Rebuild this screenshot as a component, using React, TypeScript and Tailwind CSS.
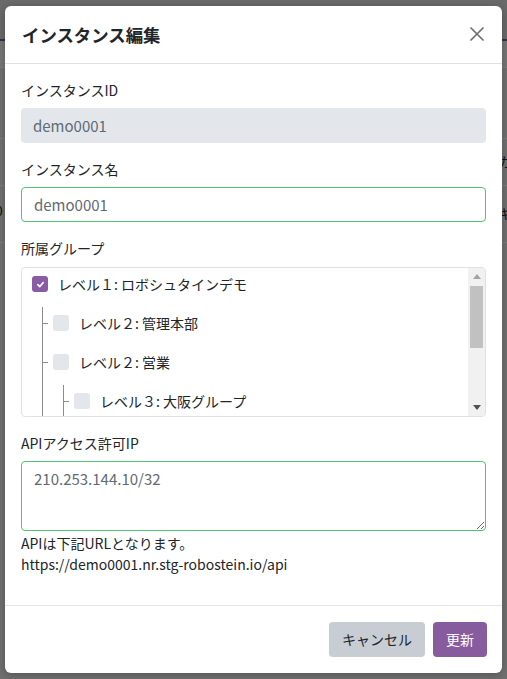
import React from "react";

function Check({ checked }: { checked?: boolean }) {
  if (checked) {
    return (
      <div className="w-4 h-4 rounded-[3px] bg-[#8a5ca6] flex items-center justify-center shrink-0">
        <svg width="9" height="9" viewBox="0 0 10 10">
          <path d="M2 5.2 L4.2 7.3 L8 2.9" fill="none" stroke="#ffffff" strokeWidth="1.8" strokeLinecap="round" strokeLinejoin="round" />
        </svg>
      </div>
    );
  }
  return <div className="w-4 h-4 rounded-[3px] bg-[#e3e6ea] shrink-0" />;
}

function Row({ label, tick, checked }: { label: string; tick?: boolean; checked?: boolean }) {
  return (
    <div className="h-[24px] flex items-center">
      {tick && <div className="w-[5px] h-px bg-[#8c8c8c] mr-[5px]" />}
      <Check checked={checked} />
      <span className="ml-[10px] text-[14px] leading-[21px] text-[#212529] whitespace-nowrap">{label}</span>
    </div>
  );
}

export default function App() {
  return (
    <div className="relative w-[507px] h-[679px] overflow-hidden bg-[#707070] font-['Noto_Sans_CJK_JP','Noto_Sans',sans-serif] pt-[6px] pl-[5px]">
      {/* page behind overlay */}
      <div className="absolute left-0 top-0 w-full h-[39px] bg-[#6a6a6a]" />
      <div className="absolute left-0 top-[39px] w-full h-[2px] bg-[#3d2d4b]" />
      <div className="absolute left-0 top-[41px] w-full h-[26px] bg-[#767676]" />
      <div className="absolute left-0 top-[67px] w-full h-px bg-[#7f7f7f]" />
      <div className="absolute left-0 top-[138px] w-full h-px bg-[#7d7d7d]" />
      <div className="absolute left-0 top-[185px] w-full h-px bg-[#7d7d7d]" />
      <div className="absolute left-0 top-[242px] w-full h-px bg-[#7d7d7d]" />
      <div className="absolute left-[-5px] top-[200px] text-[14px] leading-[21px] text-[#111111]">0</div>
      <div className="absolute left-[498px] top-[151px] text-[14px] leading-[21px] text-[#111111]">ガ</div>
      <div className="absolute left-[498px] top-[203px] text-[14px] leading-[21px] text-[#111111]">キ</div>

      <div className="relative z-10 w-[497px] h-[667px] bg-white rounded-[6px] shadow-[0_2px_8px_rgba(0,0,0,0.25)] flex flex-col">
        {/* header */}
        <div className="h-[58px] shrink-0 flex items-center justify-between pl-[17px] pr-[18px] border-b border-[#dee2e6]">
          <h1 className="text-[17.4px] font-bold text-[#212529] leading-[26px]">インスタンス編集</h1>
          <svg width="14" height="14" viewBox="0 0 14 14" className="mt-[-1px]">
            <path d="M1 1 L13 13 M13 1 L1 13" stroke="#6c6f73" strokeWidth="1.7" strokeLinecap="round" />
          </svg>
        </div>

        {/* body */}
        <div className="flex-1 px-[16px] pt-[16px]">
          <div className="mb-[16px]">
            <div className="text-[14px] leading-[21px] text-[#212529] mb-[7px]">インスタンスID</div>
            <input
              readOnly
              defaultValue="demo0001"
              className="w-full h-[35px] rounded-[4px] bg-[#e3e6ea] px-[12px] text-[15px] text-[#5f6a74] outline-none"
            />
          </div>

          <div className="mb-[16px]">
            <div className="text-[14px] leading-[21px] text-[#212529] mb-[7px]">インスタンス名</div>
            <input
              readOnly
              defaultValue="demo0001"
              className="w-full h-[35px] rounded-[4px] border border-[#52c46f] bg-white px-[12px] text-[15px] text-[#5f6a74] outline-none"
            />
          </div>

          <div className="mb-[16px]">
            <div className="text-[14px] leading-[21px] text-[#212529] mb-[8px]">所属グループ</div>
            <div className="h-[150px] border border-[#dee2e6] rounded-[4px] flex overflow-hidden">
              <div className="flex-1 overflow-hidden pt-[4px] pl-[10px]">
                <Row label="レベル１: ロボシュタインデモ" checked />
                <div className="ml-[10px] mt-[11px] pt-[4px] border-l border-[#8c8c8c] flex flex-col gap-[15px]">
                  <Row label="レベル２: 管理本部" tick />
                  <div>
                    <Row label="レベル２: 営業" tick />
                    <div className="ml-[20px] mt-[11px] pt-[4px] pb-[40px] border-l border-[#8c8c8c] flex flex-col gap-[15px]">
                      <Row label="レベル３: 大阪グループ" tick />
                    </div>
                  </div>
                </div>
              </div>
              <div className="w-[17px] bg-[#f1f1f1] flex flex-col shrink-0">
                <div className="h-[17px] flex items-center justify-center">
                  <svg width="8" height="5" viewBox="0 0 8 5">
                    <path d="M4 0 L8 5 L0 5 Z" fill="#a3a3a3" />
                  </svg>
                </div>
                <div className="flex-1">
                  <div className="mx-[2px] mt-[1px] h-[62px] bg-[#c1c1c1]" />
                </div>
                <div className="h-[17px] flex items-center justify-center">
                  <svg width="8" height="5" viewBox="0 0 8 5">
                    <path d="M0 0 L8 0 L4 5 Z" fill="#505050" />
                  </svg>
                </div>
              </div>
            </div>
          </div>

          <div>
            <div className="text-[14px] leading-[21px] text-[#212529] mb-[7px]">APIアクセス許可IP</div>
            <textarea
              readOnly
              defaultValue="210.253.144.10/32"
              className="block w-full h-[70px] rounded-[4px] border border-[#52c46f] bg-white px-[12px] pt-[6px] text-[15px] leading-[22px] text-[#5f6a74] outline-none resize-y"
            />
            <div className="mt-[2px] text-[14px] leading-[21px] text-[#212529]">APIは下記URLとなります。</div>
            <div className="text-[14px] leading-[21px] text-[#212529]">https://demo0001.nr.stg-robostein.io/api</div>
          </div>
        </div>

        {/* footer */}
        <div className="h-[68px] shrink-0 border-t border-[#e3e3e3] flex items-center justify-end gap-[8px] pr-[15px]">
          <button className="w-[96px] h-[35px] rounded-[4px] bg-[#c8ccd3] text-[14px] text-[#212529]">キャンセル</button>
          <button className="w-[54px] h-[35px] rounded-[4px] bg-[#875c9f] text-[14px] text-white">更新</button>
        </div>
      </div>
    </div>
  );
}
